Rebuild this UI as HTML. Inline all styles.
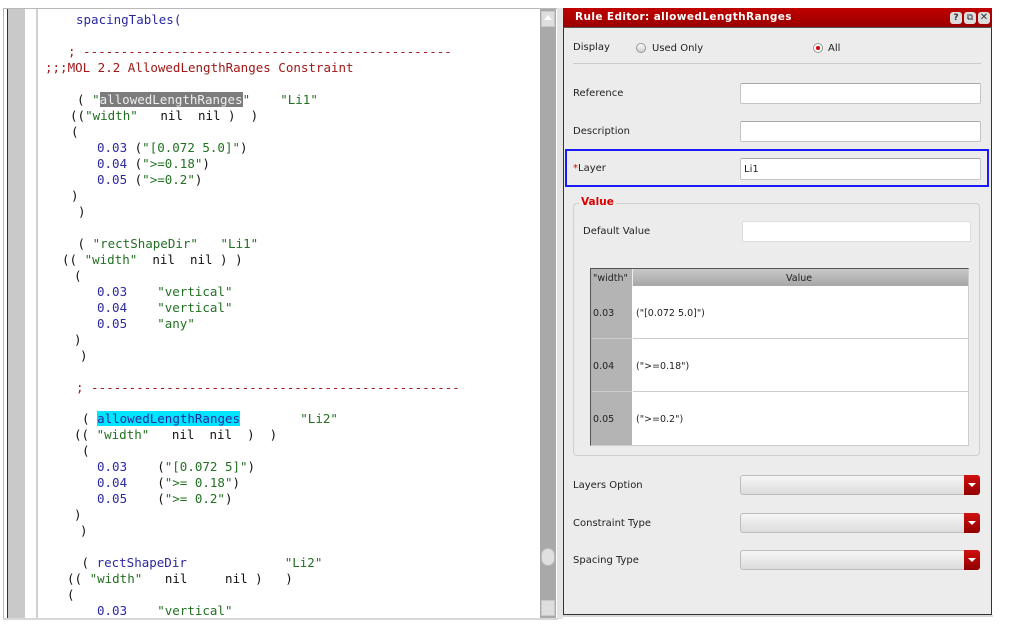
<!DOCTYPE html>
<html><head><meta charset="utf-8"><style>
*{margin:0;padding:0;box-sizing:border-box}
body{width:1013px;height:629px;background:#fff;position:relative;overflow:hidden;font-family:"DejaVu Sans","Liberation Sans",sans-serif}
.a{position:absolute}
#ed{left:3px;top:8px;width:555px;height:612px;border:1px solid #b8b8b8;background:#fff}
.code{position:absolute;font-family:"DejaVu Sans Mono","Liberation Mono",monospace;font-size:12.5px;line-height:16px;white-space:pre;color:#111}
.b{color:#2a2aa0}.g{color:#227022}.r{color:#a01818}
.lab{position:absolute;font-size:10px;color:#222;margin-top:1px}
.inp{position:absolute;background:#fff;border:1px solid #c4c4c4;border-top-color:#a8a8a8;border-radius:2px}
.dd{position:absolute;height:20px;background:linear-gradient(#f6f6f6,#dcdcdc);border:1px solid #bdbdbd;border-radius:3px}
.dd i{position:absolute;right:-1px;top:-1px;width:16px;height:20px;background:linear-gradient(#d01010,#900000);border-radius:0 3px 3px 0}
.dd i:after{content:"";position:absolute;left:4px;top:8px;border-left:4px solid transparent;border-right:4px solid transparent;border-top:4px solid #fff}
</style></head><body>
<div class="a" id="ed"></div>
<div class="a" style="left:7px;top:9px;width:1px;height:610px;background:#333"></div>
<div class="a" style="left:8px;top:9px;width:17px;height:610px;background:#c9c9c9"></div>
<div class="a" style="left:36px;top:9px;width:2px;height:610px;background:#d0d0d0"></div>
<div class="a" style="left:540px;top:9px;width:16px;height:610px;background:#a9a9a9"></div>
<div class="a" style="left:541px;top:11px;width:14px;height:16px;background:#dedede;border:1px solid #c8c8c8"></div>
<div class="a" style="left:544px;top:15px;border-left:4px solid transparent;border-right:4px solid transparent;border-bottom:5px solid #fff"></div>
<div class="a" style="left:541px;top:600px;width:14px;height:16px;background:#dedede;border:1px solid #c8c8c8"></div>
<div class="a" style="left:541px;top:548px;width:14px;height:18px;background:#e0e0e0;border-radius:7px;border:1px solid #bbb"></div>
<div class="a" style="left:557px;top:8px;width:6px;height:614px;background:#e4e4e4"></div>

<div class="code b" style="left:76px;top:12px">spacingTables(</div>
<div class="code r" style="left:68px;top:44px">; -------------------------------------------------</div>
<div class="code r" style="left:45px;top:60px">;;;MOL 2.2 AllowedLengthRanges Constraint</div>
<div class="code" style="left:77px;top:92px">( <span class="g">"<span style="background:#7c7c7c;color:#eee">allowedLengthRanges</span>"</span>    <span class="g">"Li1"</span></div>
<div class="code" style="left:70px;top:108px">((<span class="g">"width"</span>   nil  nil )  )</div>
<div class="code" style="left:71px;top:124px">(</div>
<div class="code" style="left:97px;top:140px"><span class="b">0.03</span> (<span class="g">"[0.072 5.0]"</span>)</div>
<div class="code" style="left:97px;top:156px"><span class="b">0.04</span> (<span class="g">"&gt;=0.18"</span>)</div>
<div class="code" style="left:97px;top:172px"><span class="b">0.05</span> (<span class="g">"&gt;=0.2"</span>)</div>
<div class="code" style="left:71px;top:188px">)</div>
<div class="code" style="left:78px;top:204px">)</div>
<div class="code" style="left:70px;top:236px"> ( <span class="g">"rectShapeDir"</span>   <span class="g">"Li1"</span></div>
<div class="code" style="left:62px;top:252px">(( <span class="g">"width"</span>  nil  nil ) )</div>
<div class="code" style="left:74px;top:268px">(</div>
<div class="code" style="left:97px;top:284px"><span class="b">0.03</span>    <span class="g">"vertical"</span></div>
<div class="code" style="left:97px;top:300px"><span class="b">0.04</span>    <span class="g">"vertical"</span></div>
<div class="code" style="left:97px;top:316px"><span class="b">0.05</span>    <span class="g">"any"</span></div>
<div class="code" style="left:74px;top:332px">)</div>
<div class="code" style="left:80px;top:348px">)</div>
<div class="code r" style="left:76px;top:380px">; -------------------------------------------------</div>
<div class="code" style="left:82px;top:411px">( <span class="b" style="background:#00e5ff">allowedLengthRanges</span>        <span class="g">"Li2"</span></div>
<div class="code" style="left:74px;top:427px">(( <span class="g">"width"</span>   nil  nil  )  )</div>
<div class="code" style="left:82px;top:443px">(</div>
<div class="code" style="left:97px;top:459px"><span class="b">0.03</span>    (<span class="g">"[0.072 5]"</span>)</div>
<div class="code" style="left:97px;top:475px"><span class="b">0.04</span>    (<span class="g">"&gt;= 0.18"</span>)</div>
<div class="code" style="left:97px;top:491px"><span class="b">0.05</span>    (<span class="g">"&gt;= 0.2"</span>)</div>
<div class="code" style="left:74px;top:507px">)</div>
<div class="code" style="left:80px;top:523px">)</div>
<div class="code" style="left:74px;top:555px"> ( <span class="b">rectShapeDir</span>             <span class="g">"Li2"</span></div>
<div class="code" style="left:67px;top:571px">(( <span class="g">"width"</span>   nil     nil )   )</div>
<div class="code" style="left:67px;top:587px">(</div>
<div class="code" style="left:97px;top:603px"><span class="b">0.03</span>    <span class="g">"vertical"</span></div>
<div class="a" style="left:3px;top:619px;width:560px;height:10px;background:#fff"></div>
<div class="a" style="left:3px;top:618px;width:555px;height:2px;background:#d8d8d8"></div>

<div class="a" style="left:563px;top:8px;width:429px;height:607px;background:#ececec;border:1px solid #333;border-top:none"></div>
<div class="a" style="left:563px;top:8px;width:429px;height:20px;background:linear-gradient(#c00000,#9a0000);border-bottom:1px solid #555"></div>
<div class="a" style="left:575px;top:11px;font-size:10.5px;font-weight:bold;color:#fff;letter-spacing:.4px">Rule Editor: allowedLengthRanges</div>
<div class="a" style="left:950px;top:12px;width:12px;height:12px;background:#ddd;border-radius:3px;font-size:9px;font-weight:bold;text-align:center;line-height:12px;color:#333">?</div>
<div class="a" style="left:964px;top:12px;width:12px;height:12px;background:#ddd;border-radius:3px;font-size:9px;text-align:center;line-height:12px;color:#333">⧉</div>
<div class="a" style="left:978px;top:12px;width:12px;height:12px;background:#ddd;border-radius:3px;font-size:10px;font-weight:bold;text-align:center;line-height:12px;color:#333">✕</div>

<div class="lab" style="left:573px;top:41px">Display</div>
<div class="a" style="left:636px;top:43px;width:10px;height:10px;border-radius:50%;background:linear-gradient(#fff,#ccc);border:1px solid #999"></div>
<div class="lab" style="left:652px;top:42px">Used Only</div>
<div class="a" style="left:813px;top:43px;width:10px;height:10px;border-radius:50%;background:#fff;border:1px solid #999"></div>
<div class="a" style="left:816px;top:46px;width:4px;height:4px;border-radius:50%;background:#d00"></div>
<div class="lab" style="left:828px;top:42px">All</div>
<div class="a" style="left:573px;top:63px;width:408px;height:1px;background:#ccc"></div>

<div class="lab" style="left:573px;top:87px">Reference</div>
<div class="inp" style="left:740px;top:83px;width:241px;height:21px"></div>
<div class="lab" style="left:573px;top:125px">Description</div>
<div class="inp" style="left:740px;top:121px;width:241px;height:21px"></div>
<div class="a" style="left:565px;top:149px;width:424px;height:38px;border:2px solid #1a1aff"></div>
<div class="lab" style="left:573px;top:162px"><span style="color:#d00">*</span>Layer</div>
<div class="inp" style="left:740px;top:158px;width:241px;height:22px"></div>
<div class="lab" style="left:744px;top:163px">Li1</div>

<div class="a" style="left:573px;top:203px;width:407px;height:253px;border:1px solid #cfcfcf;border-radius:4px"></div>
<div class="a" style="left:579px;top:196px;padding:0 2px;background:#ececec;font-size:10.5px;font-weight:bold;color:#d00">Value</div>
<div class="lab" style="left:583px;top:225px">Default Value</div>
<div class="inp" style="left:742px;top:221px;width:229px;height:21px;border-color:#ddd"></div>

<div class="a" style="left:590px;top:268px;width:379px;height:178px;background:#fff;border:1px solid #555;border-right:1px solid #ccc;border-bottom:1px solid #ccc"></div>
<div class="a" style="left:591px;top:269px;width:377px;height:17px;background:linear-gradient(#c8c8c8,#a6a6a6)"></div>
<div class="a" style="left:591px;top:269px;width:41px;height:176px;background:#b4b4b4"></div>
<div class="a" style="left:632px;top:269px;width:1px;height:17px;background:#eee"></div>
<div class="lab" style="left:593px;top:272px;font-size:9.5px">"width"</div>
<div class="lab" style="left:786px;top:272px;font-size:9.5px">Value</div>
<div class="a" style="left:633px;top:338px;width:335px;height:1px;background:#ccc"></div>
<div class="a" style="left:633px;top:391px;width:335px;height:1px;background:#ccc"></div>
<div class="a" style="left:592px;top:338px;width:40px;height:1px;background:#ccc"></div>
<div class="a" style="left:592px;top:391px;width:40px;height:1px;background:#ccc"></div>
<div class="lab" style="left:593px;top:307px;font-size:9.5px">0.03</div>
<div class="lab" style="left:636px;top:307px;font-size:9.5px">("[0.072 5.0]")</div>
<div class="lab" style="left:593px;top:360px;font-size:9.5px">0.04</div>
<div class="lab" style="left:636px;top:360px;font-size:9.5px">("&gt;=0.18")</div>
<div class="lab" style="left:593px;top:413px;font-size:9.5px">0.05</div>
<div class="lab" style="left:636px;top:413px;font-size:9.5px">("&gt;=0.2")</div>

<div class="lab" style="left:573px;top:479px">Layers Option</div>
<div class="dd" style="left:740px;top:475px;width:240px"><i></i></div>
<div class="lab" style="left:573px;top:517px">Constraint Type</div>
<div class="dd" style="left:740px;top:513px;width:240px"><i></i></div>
<div class="lab" style="left:573px;top:554px">Spacing Type</div>
<div class="dd" style="left:740px;top:550px;width:240px"><i></i></div>
<div class="a" style="left:563px;top:615px;width:430px;height:2px;background:#d8d8d8"></div>
</body></html>
